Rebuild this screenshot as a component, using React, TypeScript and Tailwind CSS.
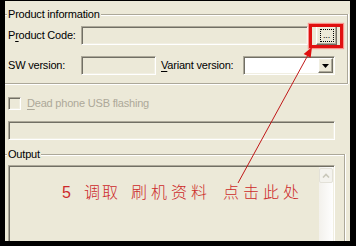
import React from 'react';

const sunken =
  'border border-t-[#aca899] border-l-[#aca899] border-b-white border-r-white shadow-[inset_1px_1px_0_#716f64,inset_-1px_-1px_0_#f1efe2]';
const raised =
  'border border-t-[#fff] border-l-[#fff] border-b-[#716f64] border-r-[#716f64] shadow-[inset_-1px_-1px_0_#aca899,inset_1px_1px_0_#f1efe2]';

function GroupLabel({ text }: { text: string }) {
  return (
    <span className="absolute left-[2px] top-[-8px] bg-[#ece9d8] px-[1px] leading-[15px]">{text}</span>
  );
}

export default function App() {
  return (
    <div className="relative w-[356px] h-[246px] overflow-hidden bg-black pl-[5px] pt-[1px] font-['Liberation_Sans',Arial,sans-serif] text-[11px] tracking-[-0.2px] text-black">
      <div className="flex h-[240px] w-[345px] flex-col overflow-hidden bg-[#ece9d8]">
        {/* Product information */}
        <div className="relative mt-[13px] h-[70px] w-[343px] shrink-0 border-t border-r border-b border-[#aca899] pl-[3px] shadow-[inset_0_1px_0_#fff,1px_0_0_#fff,0_1px_0_#fff]">
          <GroupLabel text="Product information" />
          <div className="mt-[11px] flex h-[19px] items-center">
            <span className="w-[73px] leading-none">
              P<span className="underline underline-offset-2">r</span>oduct Code:
            </span>
            <div className={`h-[19px] w-[227px] bg-[#ece9d8] ${sunken}`} />
            <div className={`ml-[8px] flex h-[19px] w-[21px] items-center justify-center bg-[#ece9d8] ${raised}`}>
              <div className="flex h-[13px] w-[14px] items-end justify-center border border-dotted border-black pb-[1px] text-[9px] leading-none">
                ...
              </div>
            </div>
          </div>
          <div className="mt-[11px] flex h-[19px] items-center">
            <span className="w-[73px] leading-none">SW version:</span>
            <div className={`h-[19px] w-[75px] bg-[#ece9d8] ${sunken}`} />
            <span className="ml-[5px] w-[82px] leading-none">
              <span className="underline underline-offset-2">V</span>ariant version:
            </span>
            <div className={`flex h-[19px] w-[92px] items-center justify-end bg-white pr-[1px] ${sunken}`}>
              <div className={`flex h-[15px] w-[15px] items-center justify-center bg-[#ece9d8] ${raised}`}>
                <svg width="7" height="4" viewBox="0 0 7 4">
                  <path d="M0 0h7L3.5 4z" fill="#000" />
                </svg>
              </div>
            </div>
          </div>
        </div>

        {/* Dead phone flashing */}
        <div className="ml-[3px] mt-[13px] flex h-[13px] items-center text-[#aca899]">
          <div className={`h-[13px] w-[13px] bg-[#ece9d8] ${sunken}`} />
          <span className="ml-[6px] leading-none">
            <span className="underline underline-offset-2">D</span>ead phone USB flashing
          </span>
        </div>
        <div className={`ml-[3px] mt-[11px] h-[19px] w-[327px] shrink-0 bg-[#ece9d8] ${sunken}`} />

        {/* Output */}
        <div className="relative mt-[14px] w-[340px] flex-1 border-t border-r border-[#aca899] pl-[3px] shadow-[inset_0_1px_0_#fff,1px_0_0_#fff]">
          <GroupLabel text="Output" />
          <div className={`mt-[10px] flex h-[100px] w-[327px] bg-[#ece9d8] ${sunken}`}>
            <div className="flex-1 whitespace-nowrap pl-[53px] pt-[17px] font-['Liberation_Sans','Noto_Sans_CJK_SC',sans-serif] text-[16px] font-light leading-[20px] tracking-normal text-[#cc2a2a]">
              <span>5</span>
              <span className="ml-[13px] tracking-[2px]">调取</span>
              <span className="ml-[11px] tracking-[4px]">刷机资料</span>
              <span className="ml-[12px] tracking-[4px]">点击此处</span>
            </div>
            <div className="mr-[1px] mt-[1px] flex w-[14px] flex-col bg-gradient-to-r from-[#f3f1ec] to-[#fefefe]">
              <div className="mt-[1px] flex h-[15px] w-[14px] items-center justify-center rounded-[2px] border border-[#e3e1d8] bg-[#f4f3ee]">
                <svg width="8" height="5" viewBox="0 0 8 5">
                  <path d="M1 4.5L4 1.5L7 4.5" stroke="#c9c7ba" strokeWidth="1.6" fill="none" />
                </svg>
              </div>
            </div>
          </div>
        </div>
      </div>

      {/* annotation highlight */}
      <div className="absolute left-[309px] top-[24px] h-[24px] w-[34px] border-[3px] border-[#e01010] shadow-[0_0_1px_1px_rgba(255,90,90,0.6)]" />
      <svg className="absolute left-0 top-0" width="356" height="246" viewBox="0 0 356 246">
        <line x1="238" y1="183" x2="308" y2="55" stroke="#c01818" strokeWidth="1" />
        <path d="M312 47L310.7 57.7L303.7 53.9Z" fill="#e01010" />
      </svg>
    </div>
  );
}
